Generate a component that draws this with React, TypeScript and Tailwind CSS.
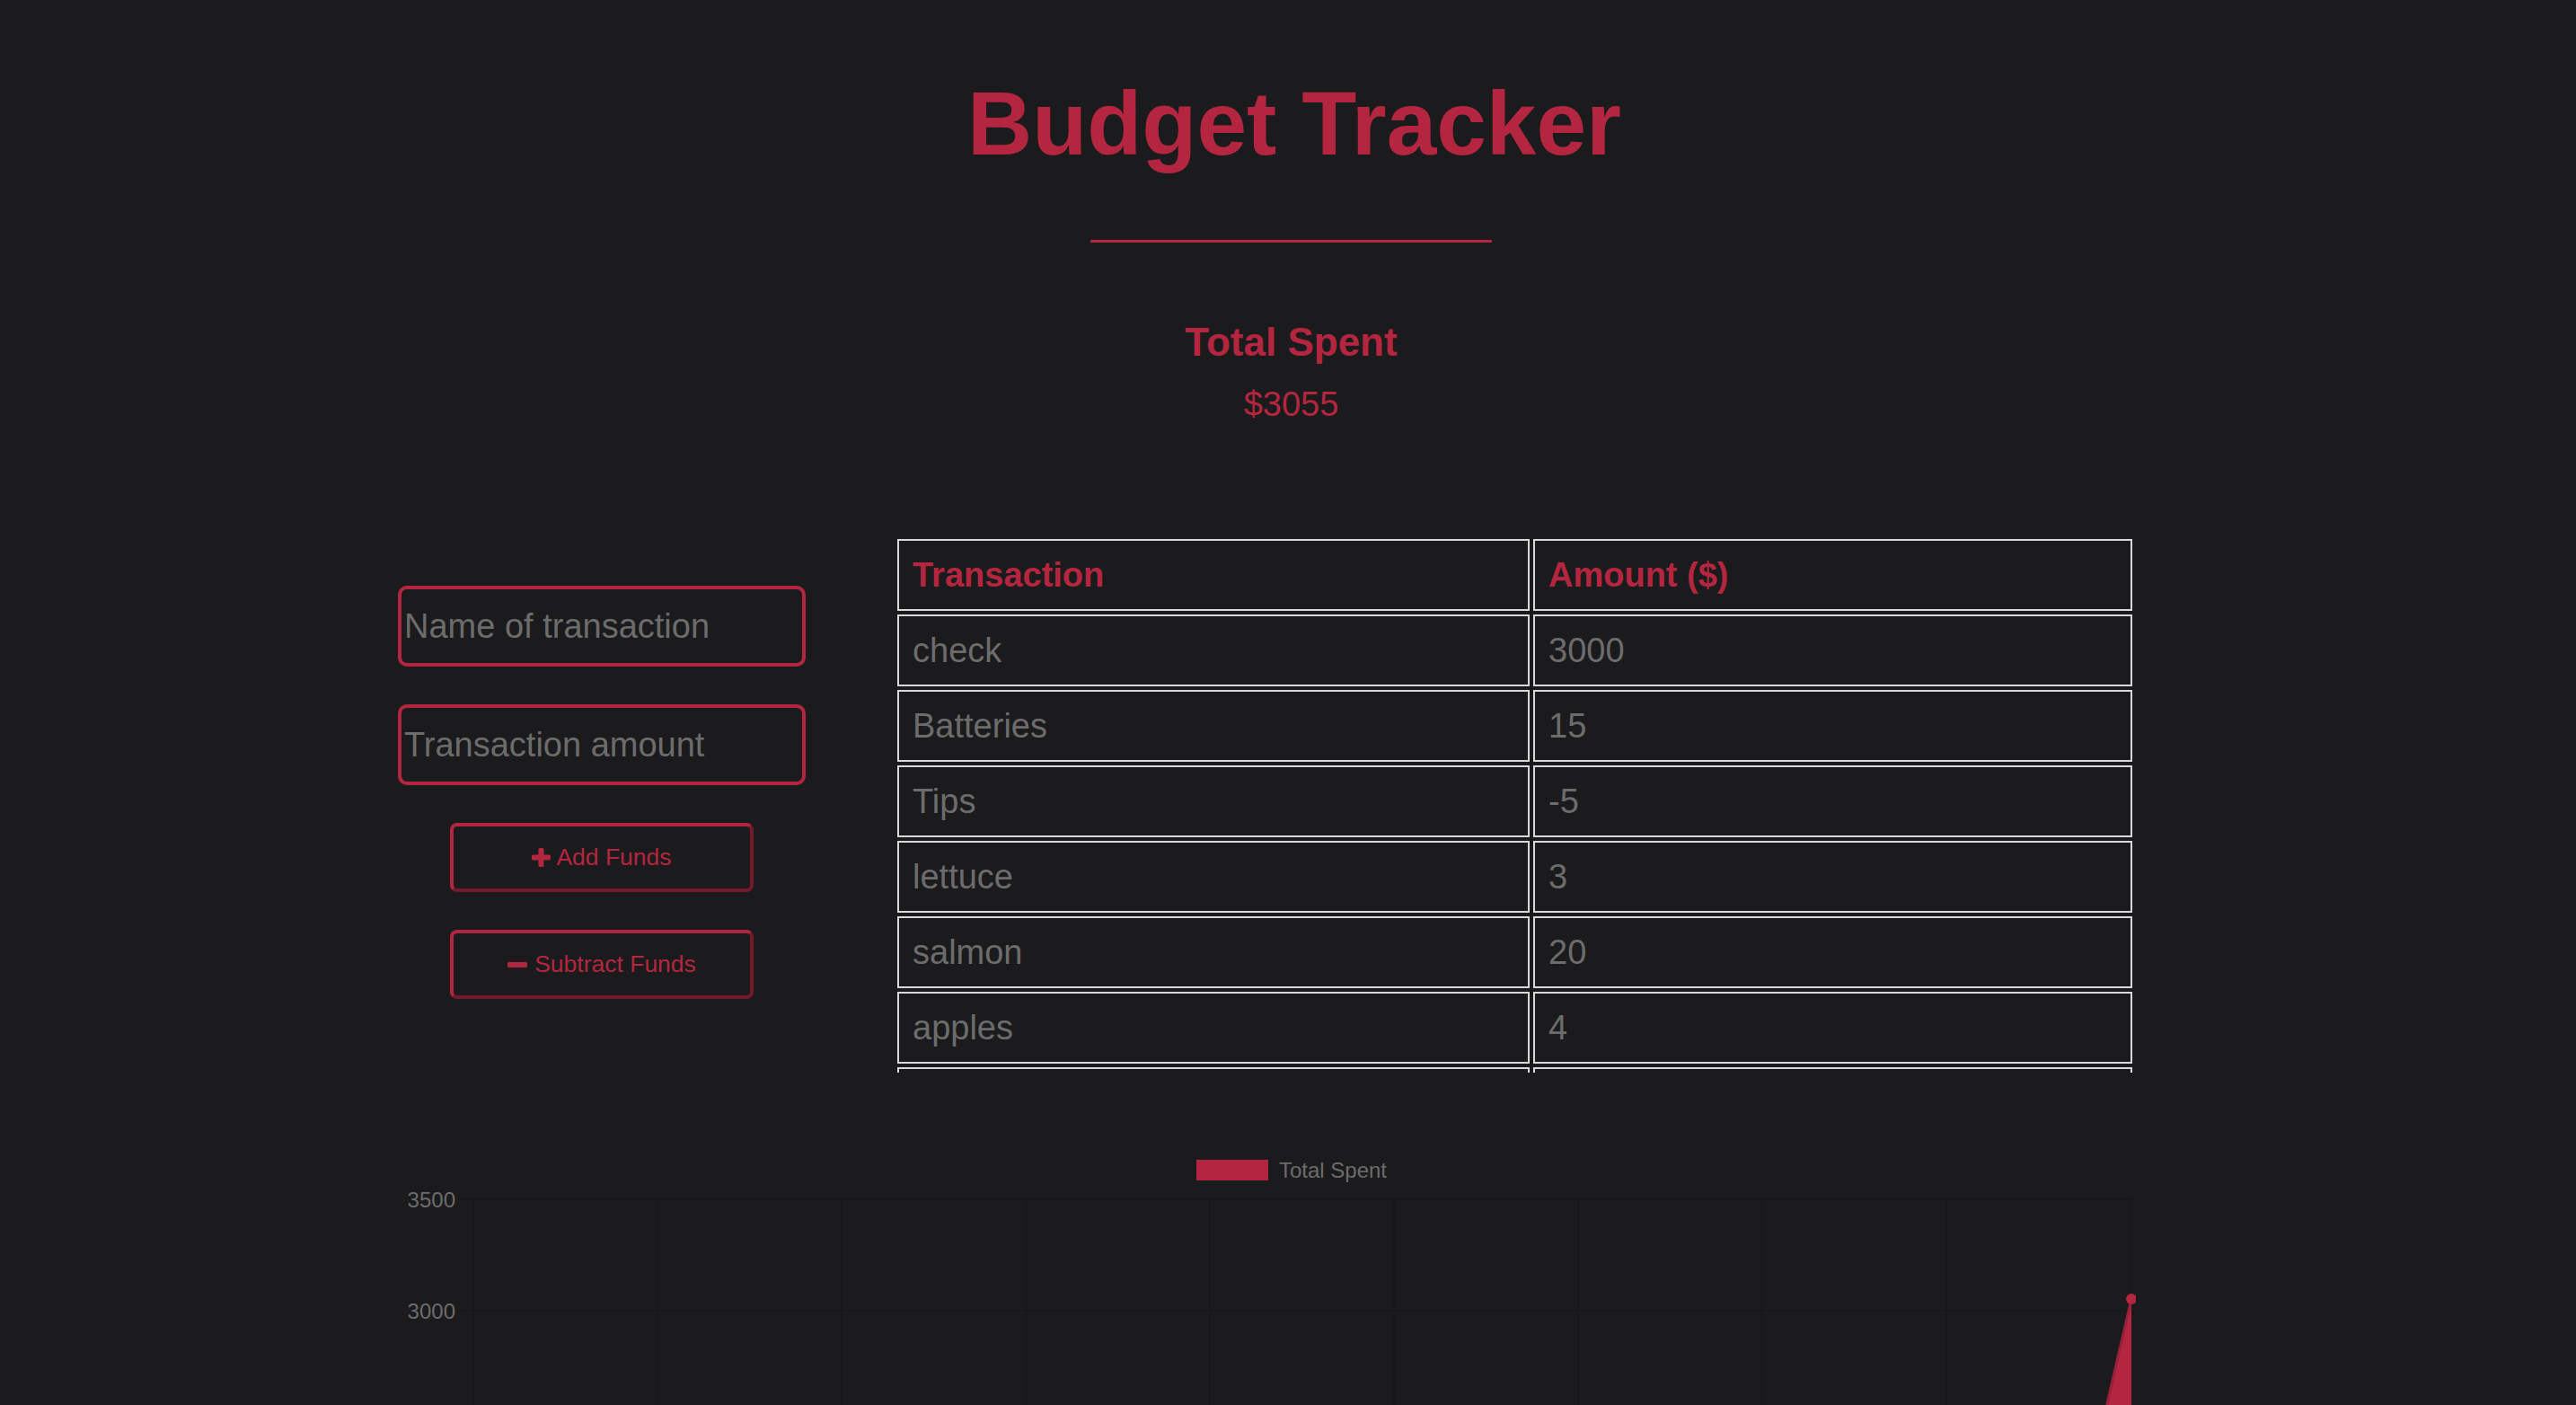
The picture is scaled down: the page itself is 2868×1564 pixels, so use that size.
const rows = [
  { name: "check", amount: "3000" },
  { name: "Batteries", amount: "15" },
  { name: "Tips", amount: "-5" },
  { name: "lettuce", amount: "3" },
  { name: "salmon", amount: "20" },
  { name: "apples", amount: "4" },
  { name: "", amount: "" },
];

const gridX = [84, 289, 494, 699, 904, 1109, 1314, 1519, 1724, 1929];

function PlusIcon() {
  return (
    <svg width="21" height="21" viewBox="0 0 21 21" fill="#b4263f">
      <rect x="7.5" y="0" width="6" height="21" rx="1.5" />
      <rect x="0" y="7.5" width="21" height="6" rx="1.5" />
    </svg>
  );
}

function MinusIcon() {
  return (
    <svg width="22" height="6" viewBox="0 0 22 6" fill="#b4263f">
      <rect x="0" y="0" width="22" height="6" rx="1.5" />
    </svg>
  );
}

function Chart() {
  return (
    <svg width="1935" height="700" className="block ml-[443px] mt-[5px]">
      {gridX.map((x) => (
        <line key={x} x1={x} y1={16} x2={x} y2={700} stroke="#161618" strokeWidth="1" />
      ))}
      {[16, 140, 264, 388].map((y) => (
        <line key={y} x1={69} y1={y} x2={1930} y2={y} stroke="#161618" strokeWidth="1" />
      ))}
      <text x="64" y="24.5" textAnchor="end" fontSize="24" fill="#6c6c6c" fontFamily="'Liberation Sans', Arial, sans-serif">3500</text>
      <text x="64" y="148.5" textAnchor="end" fontSize="24" fill="#6c6c6c" fontFamily="'Liberation Sans', Arial, sans-serif">3000</text>
      <polygon points="1930,127 1930,1100 1724,1015" fill="#b4263f" />
      <line x1="1724" y1="1015" x2="1930" y2="127" stroke="#98203a" strokeWidth="3" />
      <circle cx="1930" cy="127" r="6" fill="#b4263f" />
    </svg>
  );
}

export default function App() {
  return (
    <div className="min-h-screen bg-[#1b1b1d] font-['Liberation_Sans',Arial,sans-serif] pb-[200px]">
      <div className="pl-[7px] text-center">
        <h1 className="pt-[87px] pl-[7px] text-[100px] leading-[100px] font-bold text-[#b4263f]">Budget Tracker</h1>
        <div className="mx-auto mt-[80px] h-[3px] w-[447px] bg-[#b4263f]" />
        <h2 className="mt-[89px] text-[44px] leading-[44px] font-bold text-[#b4263f]">Total Spent</h2>
        <p className="mt-[28px] text-[38px] leading-[38px] text-[#b4263f]">$3055</p>
      </div>

      <div className="mt-[127px] flex items-start pl-[443px]">
        <div className="mt-[56px] flex w-[454px] flex-col items-center gap-[42px]">
          <input
            type="text"
            placeholder="Name of transaction"
            className="h-[90px] w-[454px] rounded-[10px] border-4 border-[#b4263f] bg-transparent px-[3px] text-[38px] text-[#6c6c6c] outline-none placeholder:text-[#6c6c6c]"
          />
          <input
            type="number"
            placeholder="Transaction amount"
            className="h-[90px] w-[454px] rounded-[10px] border-4 border-[#b4263f] bg-transparent px-[3px] text-[38px] text-[#6c6c6c] outline-none placeholder:text-[#6c6c6c]"
          />
          <button className="flex h-[77px] w-[338px] items-center justify-center gap-[6px] rounded-[8px] border-4 border-t-[#b4263f] border-l-[#b4263f] border-b-[#751a2c] border-r-[#751a2c] text-[26.5px] text-[#b4263f]">
            <PlusIcon />
            <span>Add Funds</span>
          </button>
          <button className="flex h-[77px] w-[338px] items-center justify-center gap-[8px] rounded-[8px] border-4 border-t-[#b4263f] border-l-[#b4263f] border-b-[#751a2c] border-r-[#751a2c] text-[26.5px] text-[#b4263f]">
            <MinusIcon />
            <span>Subtract Funds</span>
          </button>
        </div>

        <div className="ml-[98px] h-[598px] w-[1383px] overflow-hidden">
          <table className="w-full table-fixed border-separate border-spacing-1">
            <thead>
              <tr>
                <th className="h-[80px] w-[704px] border-2 border-[#d9d9d9] px-[15px] text-left align-middle text-[38px] font-bold text-[#b4263f]">Transaction</th>
                <th className="h-[80px] border-2 border-[#d9d9d9] px-[15px] text-left align-middle text-[38px] font-bold text-[#b4263f]">Amount ($)</th>
              </tr>
            </thead>
            <tbody>
              {rows.map((r, i) => (
                <tr key={i}>
                  <td className="h-[80px] border-2 border-[#d9d9d9] px-[15px] align-middle text-[38px] text-[#6c6c6c]">{r.name}</td>
                  <td className="h-[80px] border-2 border-[#d9d9d9] px-[15px] align-middle text-[38px] text-[#6c6c6c]">{r.amount}</td>
                </tr>
              ))}
            </tbody>
          </table>
        </div>
      </div>

      <div className="mt-[97px] flex items-center justify-center gap-[12px] pl-[8px]">
        <div className="h-[23px] w-[80px] bg-[#b4263f]" />
        <span className="text-[24px] leading-[23px] text-[#6c6c6c]">Total Spent</span>
      </div>
      <Chart />
    </div>
  );
}
